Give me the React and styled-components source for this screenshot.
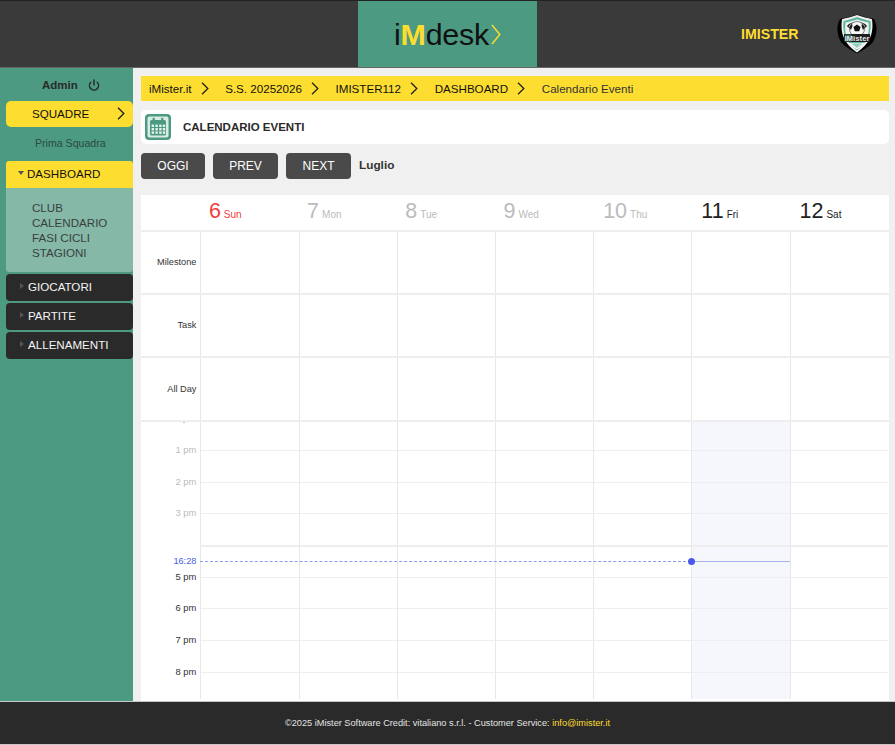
import React from 'react';
import styled, { createGlobalStyle } from 'styled-components';
import { Power } from 'lucide-react';

const Global = createGlobalStyle`
  html, body { margin: 0; padding: 0; background: #f0f0f0; }
  body { font-family: "Liberation Sans", Arial, sans-serif; }
  * { box-sizing: border-box; }
`;

const calendarColumns = '59.4px repeat(7, 98.2px)';

const Page = styled.div`
  width: 895px; height: 745px; overflow: hidden; display: flex; flex-direction: column;
`;
const Header = styled.header`
  height: 68px; flex: none; display: grid; grid-template-columns: 358px 179px 1fr;
  background: #3a3a3a; border-top: 1px solid #222; border-bottom: 1px solid #666;
`;
const LogoPanel = styled.div`
  grid-column: 2; background: #4c9a82; display: flex; align-items: center; justify-content: center; gap: 2px;
`;
const LogoText = styled.span`
  font-size: 30.4px; color: #111; letter-spacing: -0.2px; line-height: 1;
  b { color: #fddd2f; font-weight: 700; }
`;
const Brand = styled.div`
  display: flex; align-items: center; padding-left: 204px; justify-content: flex-start; gap: 37px;
`;
const BrandName = styled.span`
  color: #fddd2f; font-weight: 700; font-size: 14.2px; width: 58px;
`;
const Body = styled.div`
  flex: 1; display: flex; min-height: 0;
`;
const Side = styled.aside`
  width: 133px; flex: none; background: #4c9a82; padding: 10px 0 0 6px; display: flex; flex-direction: column;
`;
const AdminRow = styled.div`
  display: flex; align-items: center; gap: 10px; height: 14px; margin-bottom: 9px;
  padding-left: 36px; font-weight: 700; font-size: 11.5px; color: #2a2a2a;
`;
const SquadreButton = styled.div`
  height: 26px; background: #fddd2f; border-radius: 5px; display: flex; align-items: center;
  justify-content: space-between; padding: 0 8px 1px 26px; font-size: 11.6px; color: #111;
`;
const TeamLink = styled.div`
  font-size: 10.6px; color: #2a4a41; padding: 10px 0 0 29px; height: 34px;
`;
const MenuHead = styled.div`
  height: 27px; display: flex; align-items: center; font-size: 11.6px; padding-bottom: 3px;
  padding-left: ${p => (p.$open ? '12px' : '14px')};
  margin-bottom: ${p => (p.$open ? 0 : '2px')};
  background: ${p => (p.$open ? '#fddd2f' : '#2a2a2a')};
  color: ${p => (p.$open ? '#111' : '#f4f4f4')};
  border-radius: ${p => (p.$open ? '3px 3px 0 0' : '4px')};
`;
const Caret = styled.i`
  width: 0; height: 0; display: block; flex: none;
  ${p => p.$open
    ? 'border-left: 3.5px solid transparent; border-right: 3.5px solid transparent; border-top: 4px solid #555; margin-right: 3px;'
    : 'border-top: 3.5px solid transparent; border-bottom: 3.5px solid transparent; border-left: 4px solid #555; margin-right: 4px;'}
`;
const SubMenu = styled.div`
  height: 84px; background: #85b8a7; padding: 12px 0 0 26px; margin-bottom: 2px; border-radius: 0 0 3px 3px;
  font-size: 11.6px; line-height: 15px; color: #3a3f3d;
`;
const Main = styled.main`
  flex: 1; min-width: 0; padding: 8px 6px 0 8px; display: flex; flex-direction: column;
`;
const Crumbs = styled.nav`
  height: 25px; flex: none; background: #fddd2f; display: flex; align-items: center; padding-left: 8px;
  font-size: 11.6px; color: #111;
`;
const Crumb = styled.span`
  display: flex; align-items: center; gap: 9px; margin-right: 16.6px;
`;
const CrumbLast = styled.span`
  color: #333;
`;
const TitleCard = styled.div`
  height: 34px; flex: none; margin-top: 9px; background: #fff; border-radius: 5px; display: flex;
  align-items: center; padding-left: 4px; gap: 12px;
`;
const Title = styled.h1`
  margin: 0; font-size: 11.5px; font-weight: 700; color: #2a2a2a;
`;
const Toolbar = styled.div`
  flex: none; display: flex; gap: 8px; margin-top: 9px; height: 42px;
`;
const NavButton = styled.div`
  width: ${p => p.$w}px; height: 26px; background: #4a4a4a; border-radius: 4px; color: #fff;
  font-size: 12px; display: flex; align-items: center; justify-content: center;
`;
const Month = styled.div`
  font-weight: 700; font-size: 11.8px; color: #333; line-height: 24px;
`;
const Calendar = styled.section`
  flex: 1; min-height: 0; background: #fff; display: flex; flex-direction: column; overflow: hidden;
`;
const DayRow = styled.div`
  height: 35px; flex: none; display: grid; grid-template-columns: ${calendarColumns};
  border-bottom: 2px solid #eee; box-sizing: content-box;
`;
const DayHead = styled.div`
  display: flex; align-items: baseline; gap: 3px; padding: 4px 0 0 ${p => (p.$num >= 10 ? 10 : 8.5)}px;
  color: ${p => (p.$tone === 'today' ? '#f33c3c' : p.$tone === 'past' ? '#bbb' : '#222')};
  b { font-weight: 400; font-size: 21.5px; line-height: 24px; }
  span { font-size: 10px; }
`;
const AllDay = styled.div`
  height: ${p => p.$h}px; flex: none; display: grid; grid-template-columns: ${calendarColumns};
  border-bottom: 2px solid #eee; box-sizing: content-box;
`;
const RowLabel = styled.div`
  font-size: 9.2px; color: #333; display: flex; align-items: center; justify-content: flex-end;
  padding: 0 4px ${p => p.$lift}px 0;
`;
const Cell = styled.div`
  border-left: 1px solid #e8e8e8;
`;
const TimeGrid = styled.div`
  position: relative; flex: none;
`;
const HourRow = styled.div`
  height: ${p => p.$h}px; display: grid; grid-template-columns: ${calendarColumns};
`;
const HourLabel = styled.div`
  font-size: 9.4px; text-align: right; padding-right: 4px; line-height: 10px; transform: translateY(-5px);
  color: ${p => (p.$past ? '#bbb' : '#333')};
`;
const GutterTick = styled.div`
  width: 2px; height: 1px; margin-left: 42px; background: #c4c4c4;
`;
const HourCell = styled.div`
  border-left: 1px solid #e8e8e8;
  border-top: ${p => (p.$first ? 'none' : p.$bold ? '2px solid #eee' : '1px solid #eee')};
  background: ${p => (p.$today ? '#f6f7fd' : 'transparent')};
`;
const NowLine = styled.div`
  position: absolute; left: 0; right: 0; top: 139px; height: 0; display: grid;
  grid-template-columns: ${calendarColumns};
`;
const NowLabel = styled.div`
  font-size: 9.2px; line-height: 10px; color: #4a5ae8; text-align: right; padding-right: 4px; transform: translateY(-5px);
`;
const NowPast = styled.div`
  grid-column: 2 / 7; border-top: 1px dashed #8f98ec; height: 0;
`;
const NowToday = styled.div`
  position: relative; border-top: 1.5px solid #a9b0ee; height: 0;
  &::before {
    content: ''; position: absolute; left: -3px; top: -4px; width: 7px; height: 7px;
    border-radius: 50%; background: #4a5ae8;
  }
`;
const Footer = styled.footer`
  height: 44px; flex: none; background: #2a2a2a; border-top: 1px solid #c8c8c8; border-bottom: 1px solid #c8c8c8;
  color: #e4e4e4; font-size: 9.2px; display: flex; align-items: center; justify-content: center;
  a { color: #fddd2f; }
`;

const Chevron = ({ size = 13, color = '#222' }) => (
  <svg width={size * 0.62} height={size} viewBox="0 0 8 13" fill="none">
    <path d="M1 .8 6.8 6.5 1 12.2" stroke={color} strokeWidth="1.3" />
  </svg>
);

const Shield = () => (
  <svg width="42" height="42" viewBox="0 0 42 42">
    <path d="M21 1.5 C27 4 34 5 38 6 C42 13 41 22 37 29 C33 34 27 37 21 40.5 C15 37 9 34 5 29 C1 22 0 13 4 6 C8 5 15 4 21 1.5Z" fill="#000" />
    <path d="M21 2 C26 4 32 5 36 6.3 C37.5 18 36 29 21 39.5 C6 29 4.5 18 6 6.3 C10 5 16 4 21 2Z" fill="#f0f0f0" />
    <path d="M21 4 C25.5 6 30.5 6.8 34.5 8 C35.5 18 34 27 21 37.5 C8 27 6.5 18 7.5 8 C11.5 6.8 16.5 6 21 4Z" fill="#5fb7a0" />
    <path d="M21 6.5 C25 8 29.5 8.8 32.5 9.6 C33 14 33 18 32 22 H10 C9 18 9 14 9.5 9.6 C12.5 8.8 17 8 21 6.5Z" fill="#eef2f0" />
    <path d="M11 13 C13 10 17 9 20 9 C15 10 13 12 12.5 15Z M31 13 C29 10 25 9 22 9 C27 10 29 12 29.5 15Z" fill="#222" />
    <circle cx="21" cy="16" r="7.5" fill="#f6f6f6" stroke="#333" strokeWidth=".6" />
    <path d="M21 11.5 l3.6 2.6 -1.4 4.2 h-4.4 l-1.4 -4.2z" fill="#111" />
    <path d="M16 10.5 l-3 4 2 2.5 1.5-4z M26 10.5 l3 4 -2 2.5 -1.5-4z" fill="#222" />
    <rect x="8" y="21" width="26" height="8" fill="#1e1e1e" />
    <rect x="9" y="21.5" width="6.5" height="7" fill="#2f6f5d" />
    <text x="21" y="27.6" textAnchor="middle" fontSize="7.8" fontFamily="Liberation Sans" fontWeight="700" fill="#e8e8e8">iMister</text>
    <path d="M12 30 H30 C28 32.5 25 34.5 21 36.5 C17 34.5 14 32.5 12 30Z" fill="#f0f0f0" />
    <path d="M15.5 30.5 H26.5 L21 34.8Z" fill="#8fd0bd" />
  </svg>
);

const CalendarIcon = () => (
  <svg width="26" height="26" viewBox="0 0 26 26">
    <rect width="26" height="26" rx="4" fill="#4c9a82" />
    <rect x="2.5" y="2.5" width="21" height="21" rx="2" fill="#d9ebe5" />
    <rect x="5" y="6" width="16" height="15.5" rx="1.5" fill="#4c9a82" />
    <rect x="7.6" y="3.8" width="2.2" height="4" rx=".6" fill="#4c9a82" />
    <rect x="16.2" y="3.8" width="2.2" height="4" rx=".6" fill="#4c9a82" />
    {[10.6, 14, 17.4].flatMap(y => [6.6, 10.4, 14.2, 17.8].map(x => (
      <rect key={`${x}-${y}`} x={x} y={y} width="2.4" height="2.4" fill="#e6f2ee" />
    )))}
  </svg>
);

const days = [
  ['6', 'Sun', 'today'], ['7', 'Mon', 'past'], ['8', 'Tue', 'past'], ['9', 'Wed', 'past'],
  ['10', 'Thu', 'past'], ['11', 'Fri', 'next'], ['12', 'Sat', 'next'],
];
const hours = [
  { h: 28, label: '', past: true, first: true },
  { h: 32, label: '1 pm', past: true },
  { h: 31, label: '2 pm', past: true },
  { h: 32, label: '3 pm', past: true },
  { h: 32, label: '', bold: true },
  { h: 31, label: '5 pm' },
  { h: 32, label: '6 pm' },
  { h: 32, label: '7 pm' },
  { h: 27, label: '8 pm' },
];

export default function App() {
  return (
    <Page>
      <Global />
      <Header>
        <LogoPanel>
          <LogoText>i<b>M</b>desk</LogoText>
          <svg width="10" height="21" viewBox="0 0 10 21" fill="none">
            <path d="M1 1 8.8 10.5 1 20" stroke="#fddd2f" strokeWidth="1.4" />
          </svg>
        </LogoPanel>
        <Brand>
          <BrandName>IMISTER</BrandName>
          <Shield />
        </Brand>
      </Header>
      <Body>
        <Side>
          <AdminRow>Admin <Power size={12} strokeWidth={3} /></AdminRow>
          <SquadreButton>SQUADRE <Chevron /></SquadreButton>
          <TeamLink>Prima Squadra</TeamLink>
          <MenuHead $open><Caret $open />DASHBOARD</MenuHead>
          <SubMenu>
            <div>CLUB</div>
            <div>CALENDARIO</div>
            <div>FASI CICLI</div>
            <div>STAGIONI</div>
          </SubMenu>
          <MenuHead><Caret />GIOCATORI</MenuHead>
          <MenuHead><Caret />PARTITE</MenuHead>
          <MenuHead><Caret />ALLENAMENTI</MenuHead>
        </Side>
        <Main>
          <Crumbs>
            <Crumb>iMister.it <Chevron /></Crumb>
            <Crumb>S.S. 20252026 <Chevron /></Crumb>
            <Crumb>IMISTER112 <Chevron /></Crumb>
            <Crumb>DASHBOARD <Chevron /></Crumb>
            <CrumbLast>Calendario Eventi</CrumbLast>
          </Crumbs>
          <TitleCard>
            <CalendarIcon />
            <Title>CALENDARIO EVENTI</Title>
          </TitleCard>
          <Toolbar>
            <NavButton $w={64}>OGGI</NavButton>
            <NavButton $w={65}>PREV</NavButton>
            <NavButton $w={65}>NEXT</NavButton>
            <Month>Luglio</Month>
          </Toolbar>
          <Calendar>
            <DayRow>
              <div />
              {days.map(([n, d, tone]) => (
                <DayHead key={d} $tone={tone} $num={Number(n)}><b>{n}</b><span>{d}</span></DayHead>
              ))}
            </DayRow>
            {[['Milestone', 61, 2], ['Task', 61, 2], ['All Day', 62, 0]].map(([label, h, lift]) => (
              <AllDay key={label} $h={h}>
                <RowLabel $lift={lift}>{label}</RowLabel>
                {days.map(([, d]) => <Cell key={d} />)}
              </AllDay>
            ))}
            <TimeGrid>
              {hours.map((row, i) => (
                <HourRow key={i} $h={row.h}>
                  {row.first ? <GutterTick /> : <HourLabel $past={row.past}>{row.label}</HourLabel>}
                  {days.map(([, d]) => (
                    <HourCell key={d} $today={d === 'Fri'} $first={row.first} $bold={row.bold} />
                  ))}
                </HourRow>
              ))}
              <NowLine>
                <NowLabel>16:28</NowLabel>
                <NowPast />
                <NowToday />
              </NowLine>
            </TimeGrid>
          </Calendar>
        </Main>
      </Body>
      <Footer>
        <span>©2025 iMister Software Credit: vitaliano s.r.l. - Customer Service: <a>info@imister.it</a></span>
      </Footer>
    </Page>
  );
}
